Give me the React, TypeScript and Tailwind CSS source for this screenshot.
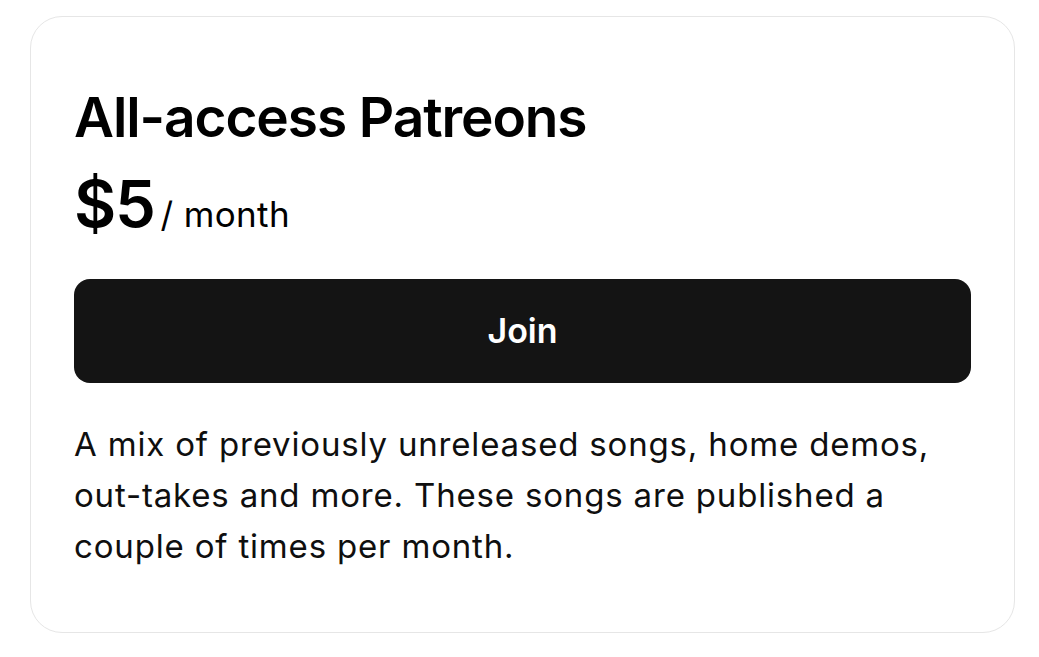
export default function App() {
  return (
    <div className="min-h-screen bg-white px-[30px] pt-[16px] font-['Inter',sans-serif] text-[#000]">
      <div className="flex w-[985px] flex-col rounded-[32px] border border-[#e6e6e6] bg-white px-[43px] pt-[70px] pb-[60px]">
        <h1 className="text-[55px] leading-[60px] font-semibold tracking-[-0.02em]">All-access Patreons</h1>
        <div className="mt-[21px] flex items-baseline">
          <span className="text-[65px] leading-[72px] font-semibold tracking-[-0.02em]">$5</span>
          <span className="ml-[6px] text-[35px] tracking-[0.01em]">/ month</span>
        </div>
        <button className="mt-[38px] h-[104px] w-full rounded-[16px] bg-[#141414] text-[34px] font-semibold text-white">
          Join
        </button>
        <p className="mt-[36px] text-[33px] leading-[51px] tracking-[0.025em] text-[#0f0f0f]">
          A mix of previously unreleased songs, home demos,
          <br />
          out-takes and more. These songs are published a
          <br />
          couple of times per month.
        </p>
      </div>
    </div>
  )
}
